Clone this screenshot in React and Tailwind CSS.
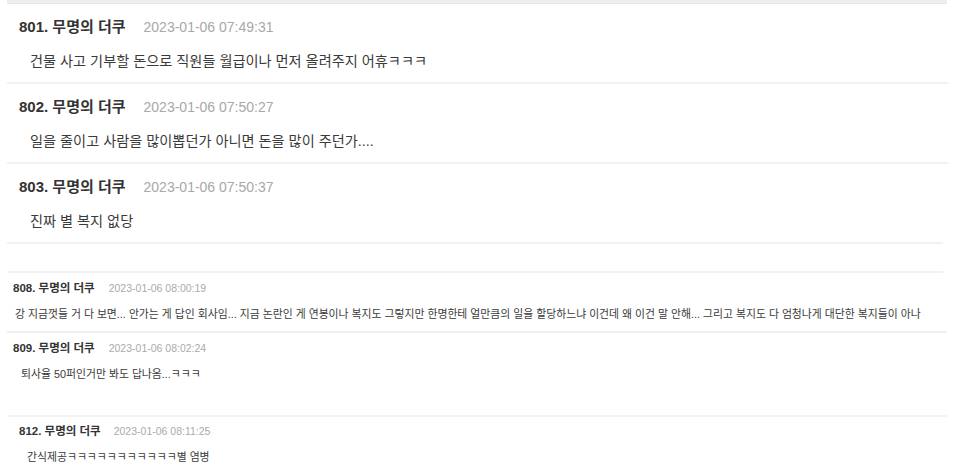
export default function App() {
  const font = { fontFamily: '"Liberation Sans", "Noto Sans CJK KR", sans-serif' };
  const top = [
    { n: "801", t: "2023-01-06 07:49:31", c: "건물 사고 기부할 돈으로 직원들 월급이나 먼저 올려주지 어휴ㅋㅋㅋ", w: "w-[941px]" },
    { n: "802", t: "2023-01-06 07:50:27", c: "일을 줄이고 사람을 많이뽑던가 아니면 돈을 많이 주던가....", w: "w-[941px]" },
    { n: "803", t: "2023-01-06 07:50:37", c: "진짜 별 복지 없당", w: "w-[936px]" },
  ];
  return (
    <div className="w-[960px] h-[469px] bg-white overflow-hidden text-[#333]" style={font}>
      <div className="ml-[7px] w-[940px] h-[4px] bg-[#eeeeee] border-b border-[#e6e6e6]" />
      {top.map((r) => (
        <div key={r.n} className={`ml-[7px] ${r.w} pt-[13px] pb-[11px] border-b-2 border-[#f1f1f1]`}>
          <div className="flex items-center h-5 pl-[12px]">
            <span className="text-[15px] font-bold text-[#333]">{r.n}. 무명의 더쿠</span>
            <span className="ml-[18px] text-[14px] text-[#a8a8a8]">{r.t}</span>
          </div>
          <div className="mt-[14px] h-5 leading-5 pl-[23px] text-[14.2px] text-[#3a3a3a] whitespace-nowrap">{r.c}</div>
        </div>
      ))}
      <div className="h-[27px]" />
      <div className="ml-[7px] w-[936px] h-[2px] bg-[#f1f1f1]" />
      <div className="ml-[7px] w-[940px] pt-[9px] pb-[10px] border-b-2 border-[#f1f1f1]">
        <div className="flex items-center h-[14px] pl-[6px]">
          <span className="text-[11.5px] font-bold text-[#333]">808. 무명의 더쿠</span>
          <span className="ml-[14px] text-[10.5px] text-[#aaa]">2023-01-06 08:00:19</span>
        </div>
        <div className="mt-[11px] h-[14px] leading-[14px] pl-[8px] text-[10.85px] text-[#3a3a3a] whitespace-nowrap">
          강 지금껏들 거 다 보면... 안가는 게 답인 회사임... 지금 논란인 게 연봉이나 복지도 그렇지만 한명한테 얼만큼의 일을 할당하느냐 이건데 왜 이건 말 안해... 그리고 복지도 다 엄청나게 대단한 복지들이 아나
        </div>
      </div>
      <div className="ml-[7px] w-[940px] pt-[9px] pb-[34px] border-b-2 border-[#f3f3f3]">
        <div className="flex items-center h-[14px] pl-[6px]">
          <span className="text-[11.5px] font-bold text-[#333]">809. 무명의 더쿠</span>
          <span className="ml-[14px] text-[10.5px] text-[#aaa]">2023-01-06 08:02:24</span>
        </div>
        <div className="mt-[11px] h-[14px] leading-[14px] pl-[14px] text-[10.85px] text-[#3a3a3a] whitespace-nowrap">
          퇴사율 50퍼인거만 봐도 답나옴...ㅋㅋㅋ
        </div>
      </div>
      <div className="ml-[7px] w-[940px] pt-[8px]">
        <div className="flex items-center h-[14px] pl-[12px]">
          <span className="text-[11.5px] font-bold text-[#333]">812. 무명의 더쿠</span>
          <span className="ml-[13px] text-[10.5px] text-[#aaa]">2023-01-06 08:11:25</span>
        </div>
        <div className="mt-[11px] h-[14px] leading-[14px] pl-[20px] text-[10.85px] text-[#3a3a3a] whitespace-nowrap">
          간식제공ㅋㅋㅋㅋㅋㅋㅋㅋㅋㅋㅋ별 염병
        </div>
      </div>
    </div>
  );
}
